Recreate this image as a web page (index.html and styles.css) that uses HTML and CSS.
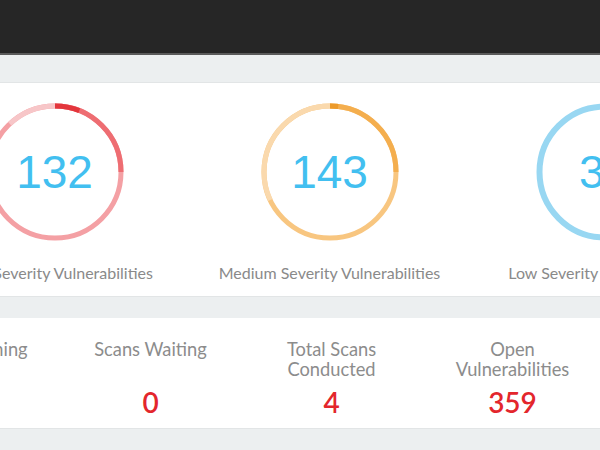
FILE: index.html
```html
<!DOCTYPE html>
<html lang="en">
<head>
    <meta charset="UTF-8">
    <meta name="viewport" content="width=device-width, initial-scale=1.0">
    <title>Scan Dashboard</title>
    <link rel="stylesheet" href="styles.css">
</head>
<body>
<div class="topbar"></div>
<div class="subbar"></div>

<div class="panel">
    <div class="gauges">
        <div class="gauge">
            <div class="ring">
                <svg width="140" height="140" viewBox="0 0 140 140">
                    <g transform="rotate(-90 70 70)" fill="none" stroke-width="5">
                        <circle cx="70" cy="70" r="66" pathLength="100" stroke="#f4a0a4" stroke-dasharray="100 0"></circle>
                        <circle cx="70" cy="70" r="66" pathLength="100" stroke="#f7c6c8" stroke-dasharray="12 88" stroke-dashoffset="12"></circle>
                        <circle cx="70" cy="70" r="66" pathLength="100" stroke="#ee6d72" stroke-dasharray="25 75"></circle>
                        <circle cx="70" cy="70" r="66" pathLength="100" stroke="#e3363c" stroke-dasharray="6 94"></circle>
                    </g>
                </svg>
                <span class="count">132</span>
            </div>
            <div class="gauge-label">High Severity Vulnerabilities</div>
        </div>
        <div class="gauge">
            <div class="ring">
                <svg width="140" height="140" viewBox="0 0 140 140">
                    <g transform="rotate(-90 70 70)" fill="none" stroke-width="5">
                        <circle cx="70" cy="70" r="66" pathLength="100" stroke="#f8c680" stroke-dasharray="100 0"></circle>
                        <circle cx="70" cy="70" r="66" pathLength="100" stroke="#fad9ad" stroke-dasharray="32 68" stroke-dashoffset="32"></circle>
                        <circle cx="70" cy="70" r="66" pathLength="100" stroke="#f4ae4e" stroke-dasharray="25 75"></circle>
                        <circle cx="70" cy="70" r="66" pathLength="100" stroke="#ec9a2a" stroke-dasharray="2 98"></circle>
                    </g>
                </svg>
                <span class="count">143</span>
            </div>
            <div class="gauge-label">Medium Severity Vulnerabilities</div>
        </div>
        <div class="gauge">
            <div class="ring">
                <svg width="140" height="140" viewBox="0 0 140 140">
                    <circle cx="70" cy="70" r="65.5" fill="none" stroke="#98d7f2" stroke-width="6"></circle>
                </svg>
                <span class="count">34</span>
            </div>
            <div class="gauge-label">Low Severity Vulnerabilities</div>
        </div>
    </div>
</div>

<div class="panel">
    <div class="stats">
        <div class="stat">
            <div class="stat-label">Scans Running</div>
            <div class="stat-value">0</div>
        </div>
        <div class="stat">
            <div class="stat-label">Scans Waiting</div>
            <div class="stat-value">0</div>
        </div>
        <div class="stat">
            <div class="stat-label">Total Scans Conducted</div>
            <div class="stat-value">4</div>
        </div>
        <div class="stat">
            <div class="stat-label">Open Vulnerabilities</div>
            <div class="stat-value">359</div>
        </div>
        <div class="stat">
            <div class="stat-label">Last Scan</div>
            <div class="stat-value">1</div>
        </div>
    </div>
</div>
</body>
</html>
```

FILE: styles.css
```css
body {
    font-family: Lato, "Open Sans", sans-serif;
    margin: 0;
    padding: 0;
    background-color: #eceff0;
    overflow: hidden;
}

.topbar {
    height: 53px;
    background-color: #262626;
    border-bottom: 2px solid #5a5a5a;
}

.subbar {
    height: 27px;
    border-bottom: 1px solid #e2e5e6;
}

.panel {
    background-color: #fff;
    border-bottom: 1px solid #e2e5e6;
    margin-bottom: 21px;
    overflow: hidden;
}

/* severity rings */
.gauges {
    display: flex;
    margin-left: -83px;
    padding: 19px 0 14px;
}

.gauge {
    flex: none;
    width: 275px;
    text-align: center;
}

.ring {
    display: grid;
    place-items: center;
    width: 140px;
    height: 140px;
    margin: 0 auto;
}

.ring svg,
.ring .count {
    grid-area: 1 / 1;
}

.count {
    font-family: "Liberation Sans", Arial, sans-serif;
    font-size: 46px;
    color: #42bff0;
    line-height: 1;
}

.gauge-label {
    margin-top: 22px;
    font-size: 16px;
    line-height: 18px;
    color: #8a8a8a;
    white-space: nowrap;
}

/* scan counters */
.stats {
    display: flex;
    margin-left: -121px;
    padding: 21px 0 10px;
}

.stat {
    flex: none;
    width: 181px;
    text-align: center;
}

.stat-label {
    height: 40px;
    max-width: 130px;
    margin: 0 auto;
    font-size: 18.3px;
    line-height: 20px;
    color: #8c8c8c;
}

.stat-value {
    margin-top: 7px;
    font-size: 28px;
    line-height: 32px;
    font-weight: 600;
    color: #e3262c;
}
```
